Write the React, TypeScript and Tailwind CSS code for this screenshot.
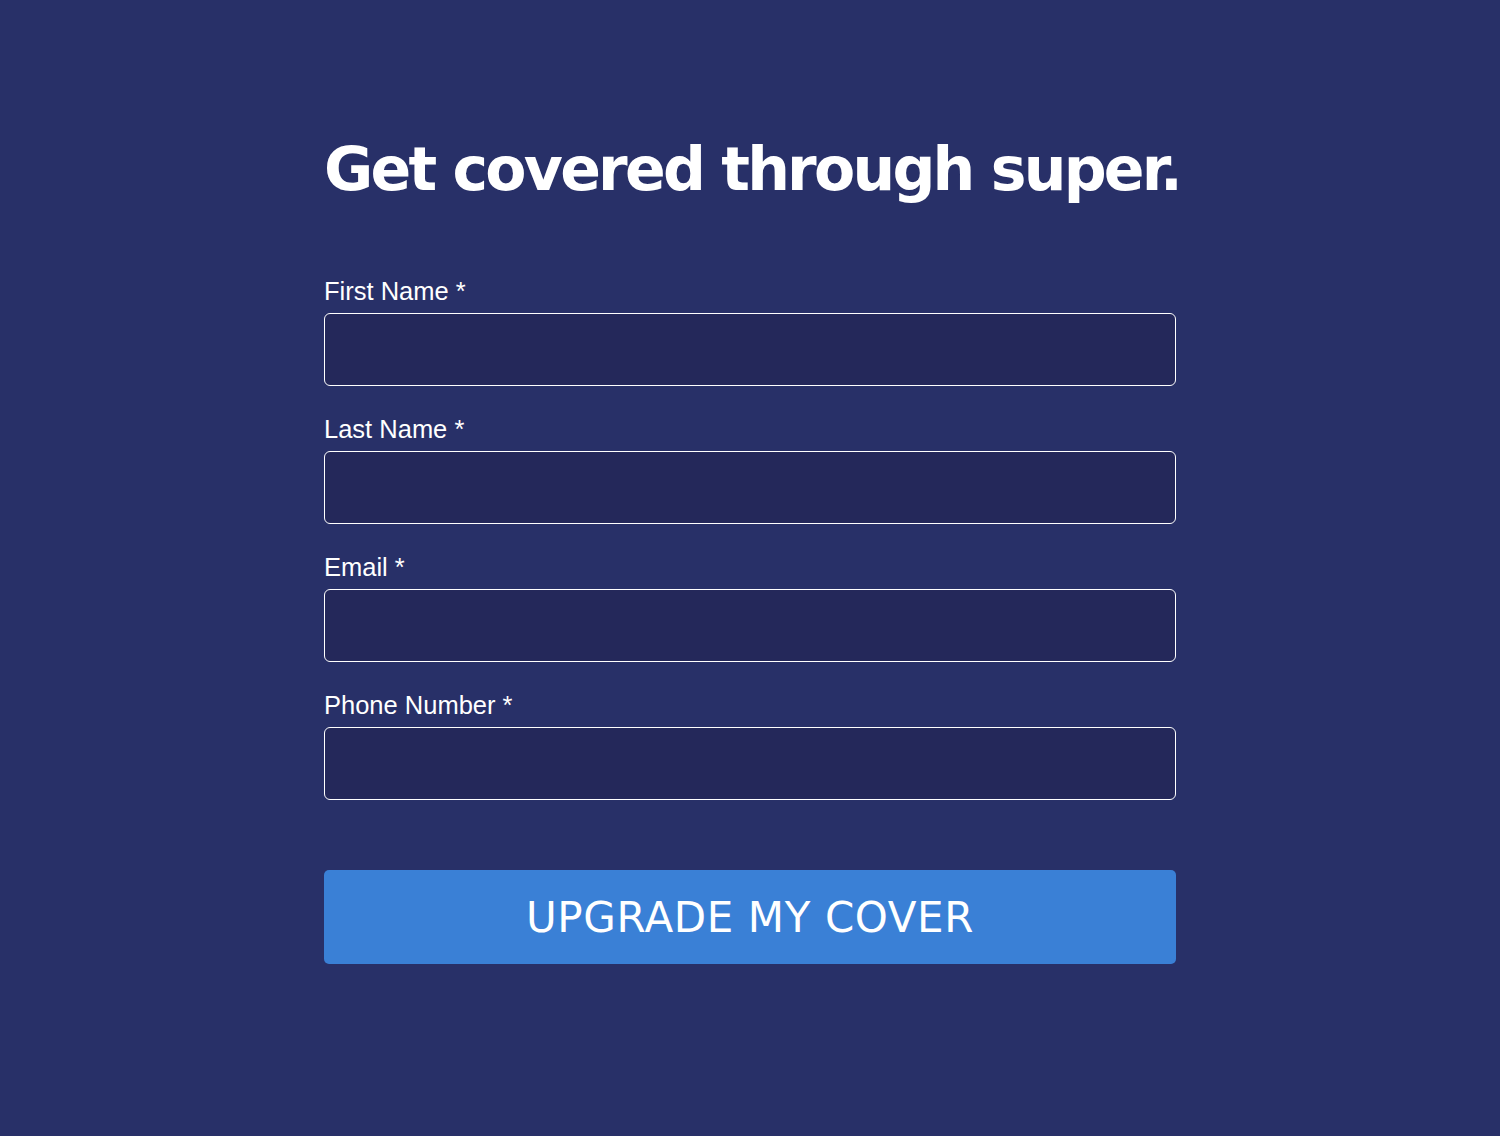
const fields = [
  {id: "first", label: "First Name", type: "text"},
  {id: "last", label: "Last Name", type: "text"},
  {id: "email", label: "Email", type: "email"},
  {id: "phone", label: "Phone Number", type: "tel"}
] as const;

export default function App() {
  return (
    <div className="min-h-[1136px] w-full bg-[#283068] pt-[129px]">
      <div className="mx-auto w-[852px]">
        <h1 className="whitespace-nowrap font-['DejaVu_Sans',sans-serif] text-[60px] font-bold leading-[80px] tracking-[-2.75px] text-white">
          Get covered through super.
        </h1>

        <form className="mt-[67px]" onSubmit={(event) => event.preventDefault()}>
          {fields.map((field) => (
            <div key={field.id} className="mb-[28px]">
              <label
                htmlFor={field.id}
                className="mb-[7px] block font-['Liberation_Sans',Arial,sans-serif] text-[25.5px] leading-[30px] text-white"
              >
                {field.label} *
              </label>
              <input
                id={field.id}
                type={field.type}
                className="block h-[73px] w-full rounded-[6px] border border-white bg-[#24285a] px-4 text-[22px] text-white outline-none"
              />
            </div>
          ))}

          <button
            type="submit"
            className="mt-[70px] flex h-[94px] w-full items-center justify-center rounded-[5px] bg-[#3a80d6] font-['DejaVu_Sans',sans-serif] text-[42px] tracking-[0.6px] text-white"
          >
            UPGRADE MY COVER
          </button>
        </form>
      </div>
    </div>
  );
}
